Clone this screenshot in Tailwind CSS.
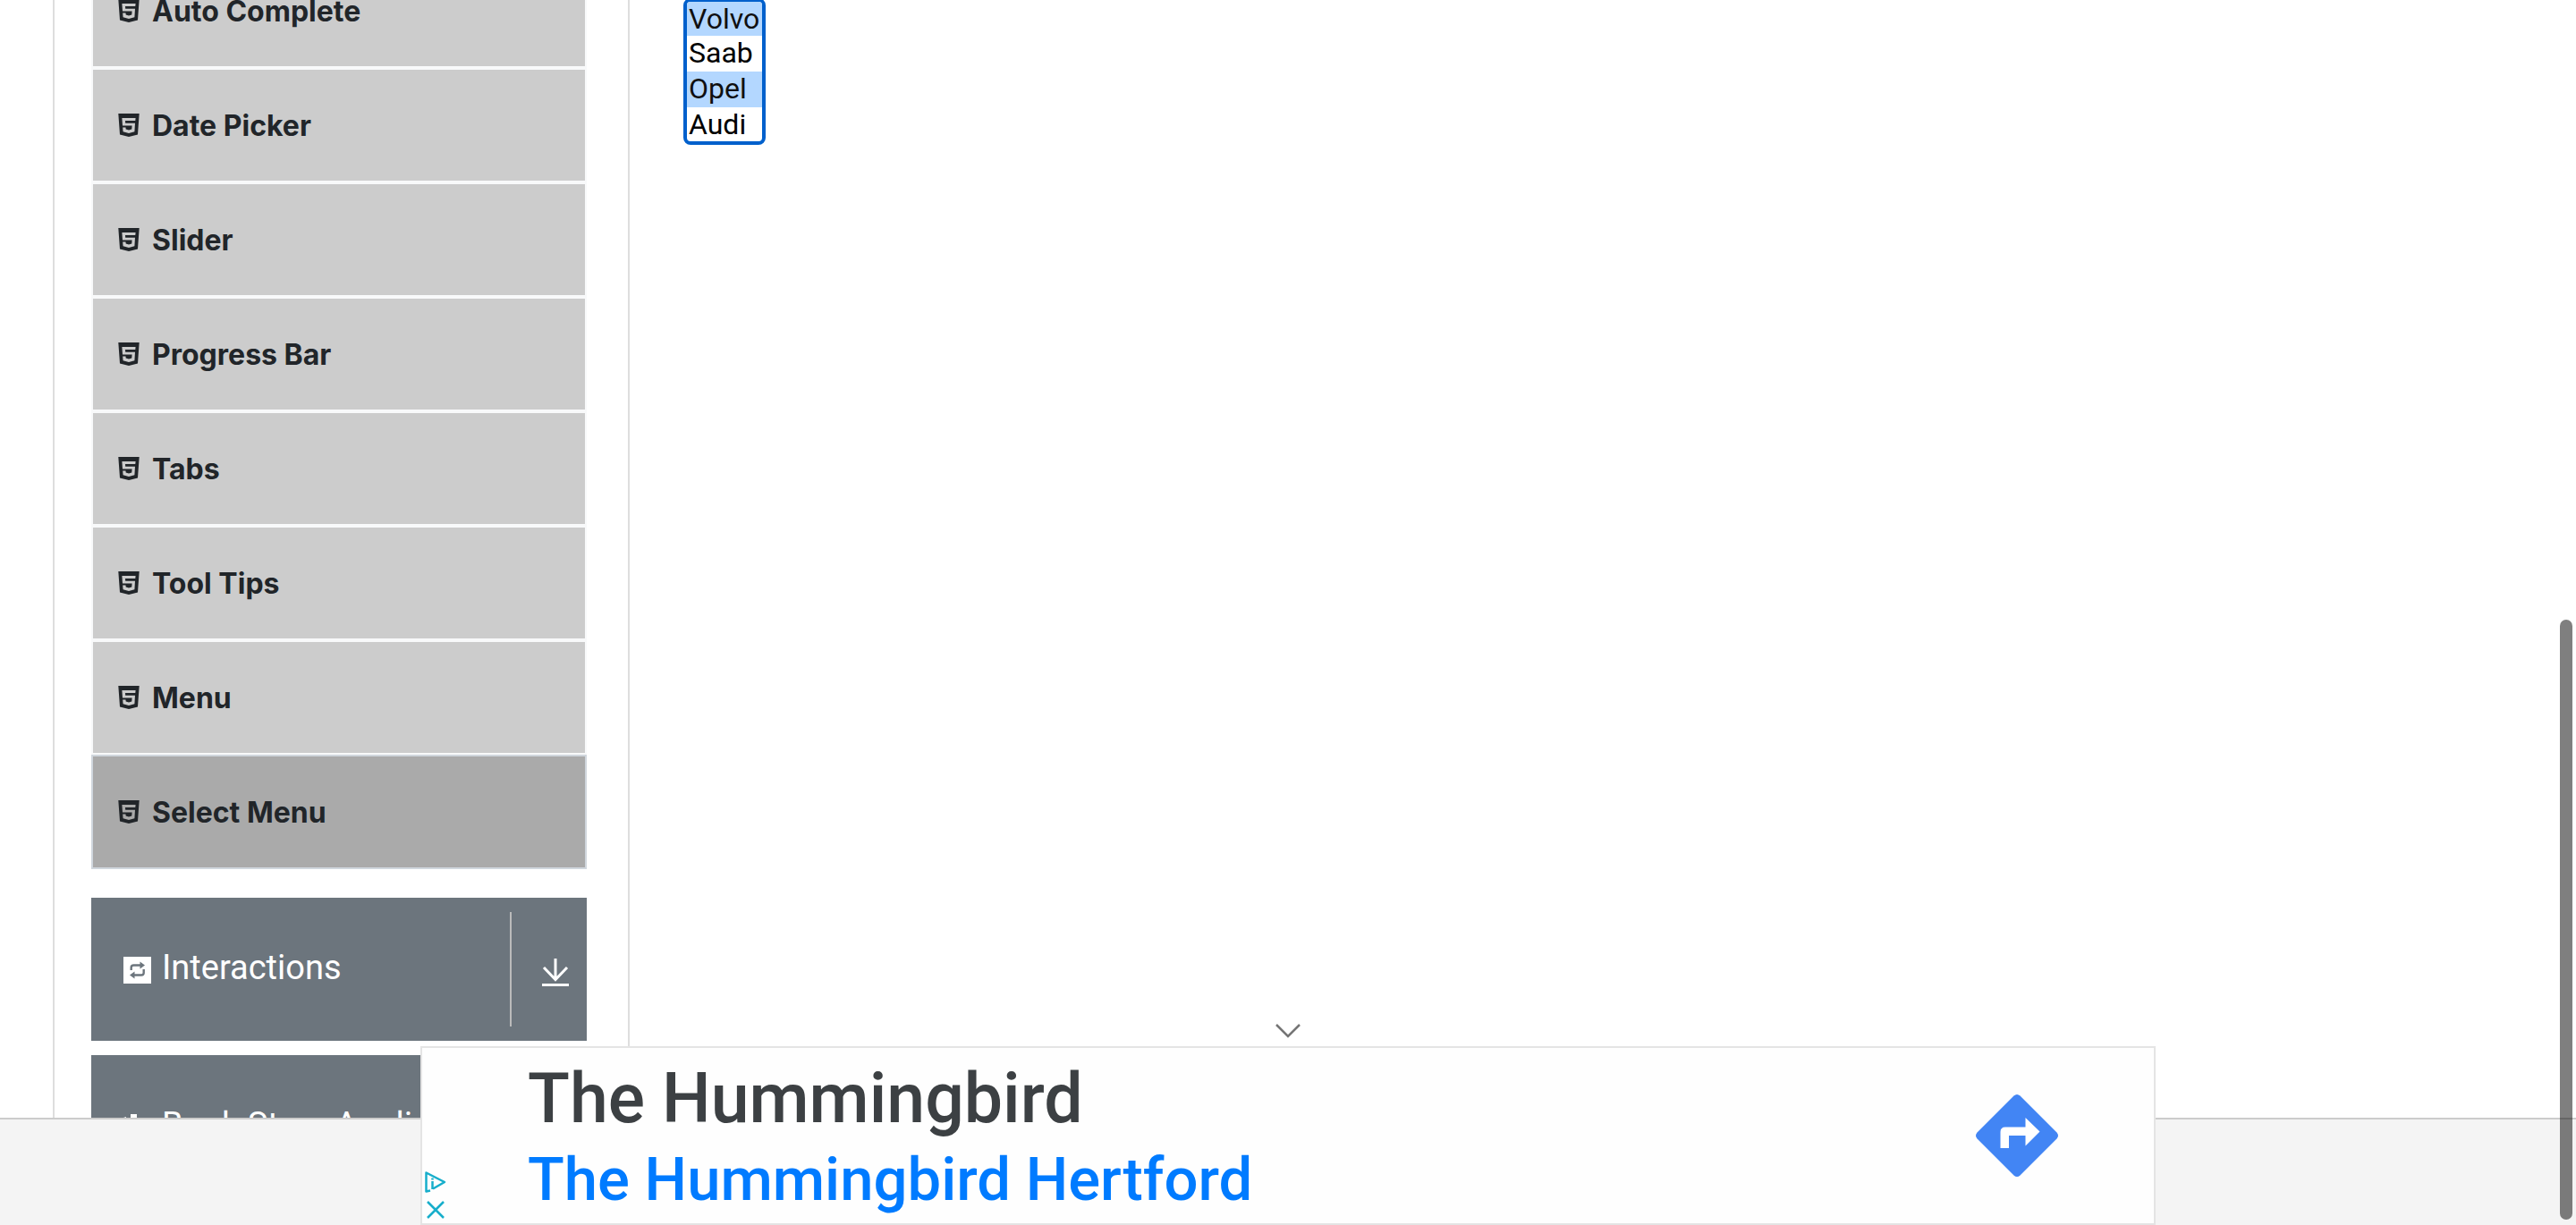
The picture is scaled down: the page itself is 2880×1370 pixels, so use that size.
<!DOCTYPE html>
<html lang="en">
<head>
<meta charset="utf-8">
<title>Select Menu</title>
<script src="https://cdn.jsdelivr.net/npm/@tailwindcss/browser@4"></script>
</head>
<body class="relative flex h-screen flex-col overflow-hidden bg-white font-[Inter,sans-serif] text-[32px] leading-[40px] text-[#212529]">
<svg class="hidden" aria-hidden="true">
  <symbol id="html5" viewBox="0 0 24 26"><path fill="currentColor" fill-rule="evenodd" d="M0.3 0H23.7L22 23.4L12 26L2 23.4ZM4.4 5L5 13.6H15.6L15.3 17.6L12 18.6L8.7 17.6L8.5 15.6H5.2L5.6 20.2L12 22L18.4 20.2L19 10.7H8.2L8 8H19.3L19.6 5Z"/></symbol>
</svg>
<main class="flex min-h-0 flex-1 overflow-hidden">
  <nav class="ml-[59px] w-[645px] shrink-0 border-x-2 border-[#dedede] pr-[46px] pl-[41px]">
    <ul class="-mt-[52px] font-bold">
      <li><a href="#" class="flex h-32 items-center gap-[14px] border-2 border-[#f8f9fa] bg-[#ccc] px-7"><svg class="h-[26px] w-6"><use href="#html5"/></svg><span class="pt-[2px]">Auto Complete</span></a></li>
      <li><a href="#" class="flex h-32 items-center gap-[14px] border-2 border-[#f8f9fa] bg-[#ccc] px-7"><svg class="h-[26px] w-6"><use href="#html5"/></svg><span class="pt-[2px]">Date Picker</span></a></li>
      <li><a href="#" class="flex h-32 items-center gap-[14px] border-2 border-[#f8f9fa] bg-[#ccc] px-7"><svg class="h-[26px] w-6"><use href="#html5"/></svg><span class="pt-[2px]">Slider</span></a></li>
      <li><a href="#" class="flex h-32 items-center gap-[14px] border-2 border-[#f8f9fa] bg-[#ccc] px-7"><svg class="h-[26px] w-6"><use href="#html5"/></svg><span class="pt-[2px]">Progress Bar</span></a></li>
      <li><a href="#" class="flex h-32 items-center gap-[14px] border-2 border-[#f8f9fa] bg-[#ccc] px-7"><svg class="h-[26px] w-6"><use href="#html5"/></svg><span class="pt-[2px]">Tabs</span></a></li>
      <li><a href="#" class="flex h-32 items-center gap-[14px] border-2 border-[#f8f9fa] bg-[#ccc] px-7"><svg class="h-[26px] w-6"><use href="#html5"/></svg><span class="pt-[2px]">Tool Tips</span></a></li>
      <li><a href="#" class="flex h-32 items-center gap-[14px] border-2 border-[#f8f9fa] bg-[#ccc] px-7"><svg class="h-[26px] w-6"><use href="#html5"/></svg><span class="pt-[2px]">Menu</span></a></li>
      <li><a href="#" class="flex h-32 items-center gap-[14px] border-2 border-[#d0d6dd] bg-[#aaa] px-7"><svg class="h-[26px] w-6"><use href="#html5"/></svg><span class="pt-[2px]">Select Menu</span></a></li>
    </ul>
    <button type="button" class="mt-8 flex h-40 w-full items-center bg-[#6c757d] py-4 pl-9 text-left font-[Roboto,sans-serif] text-[38px] text-white">
      <svg class="mt-[2px] h-[30px] w-[31px]" viewBox="0 0 31 30"><path fill="#fff" d="M0 0H31V30H0Z"/><path fill="none" stroke="#6c757d" stroke-width="2.4" d="M8.700 15V12Q8.700 9.500 11.500 9.500H19M22.700 14V18Q22.700 20.500 20 20.500H12"/><path fill="#6c757d" d="M18.500 5.500L24 9.500L18.500 13.500ZM12.500 16.500V24.500L7 20.500Z"/></svg>
      <span class="ml-3 flex-1 pb-1">Interactions</span>
      <span class="flex h-32 w-[86px] items-center border-l-2 border-[#bbb] pl-[34px]"><svg class="mt-2 h-8 w-[30px]" viewBox="0 0 30 32" fill="none" stroke="#fff" stroke-width="3"><path d="M15 0V22M2 10L15 23.500L28 10M0 29.500H30"/></svg></span>
    </button>
    <button type="button" class="mt-4 flex h-40 w-full items-center bg-[#6c757d] py-4 pl-9 text-left font-[Roboto,sans-serif] text-[38px] text-white">
      <svg class="mt-[2px] h-[30px] w-[31px]" viewBox="0 0 31 30" fill="#fff"><path d="M8 0H15V5H8ZM0 4L3 3V28H0ZM18 10H29V28H5V10Z"/></svg>
      <span class="ml-3 flex-1 pb-1 whitespace-nowrap">Book Store Application</span>
    </button>
  </nav>
  <section class="flex-1 pl-[60px]">
    <label for="cars" class="sr-only">Standard multi select</label>
    <select id="cars" multiple size="4" class="-mt-[2px] h-[164px] w-[92px] overflow-hidden rounded-lg border-4 border-[#0060cc] bg-white p-0 font-[Roboto,sans-serif] text-black">
      <option selected class="h-[38px] bg-[#b3d7ff] from-[#b3d7ff] to-[#b3d7ff] p-0 pl-[2px] leading-[34px] checked:bg-linear-to-r">Volvo</option>
      <option class="h-10 p-0 pl-[2px] leading-[40px]">Saab</option>
      <option selected class="h-10 bg-[#b3d7ff] from-[#b3d7ff] to-[#b3d7ff] p-0 pl-[2px] leading-[40px] checked:bg-linear-to-r">Opel</option>
      <option class="h-[38px] p-0 pl-[2px] leading-[40px]">Audi</option>
    </select>
  </section>
</main>
<footer class="h-[120px] shrink-0 border-t-2 border-[#ccc] bg-[#f4f4f4]"></footer>

<aside class="absolute bottom-0 left-1/2 w-[1940px] -translate-x-1/2">
  <button type="button" aria-label="Collapse" class="mx-auto mb-2 block"><svg class="h-[18px] w-7" viewBox="0 0 28 18" fill="none" stroke="#757575" stroke-width="2.500"><path d="M1 2L14 15L27 2"/></svg></button>
  <div class="relative flex h-[200px] items-center justify-between border-2 border-[#e4e4e4] bg-[#fefefe] pr-[107px] pl-[118px]">
    <div class="pt-2 font-[Roboto,sans-serif] font-medium">
      <a href="#" class="block text-[77px] leading-[90px] text-[#3c4043]">The Hummingbird</a>
      <a href="#" class="block text-[67px] leading-[90px] text-[#007bff]">The Hummingbird Hertford</a>
    </div>
    <a href="#" aria-label="Directions"><svg class="h-[92px] w-[92px]" viewBox="0 0 92 92"><path fill="#4285f4" d="M42.500 1.500Q46-1.500 49.500 1.500L90.500 42.500Q93.500 46 90.500 49.500L49.500 90.500Q46 93.500 42.500 90.500L1.500 49.500Q-1.500 46 1.500 42.500Z"/><path fill="#fff" d="M27.500 60V42Q27.500 36.500 33 36.500H55.500V26L71.500 41.500L55.500 57.500V46H37V60Z"/></svg></a>
    <div class="absolute bottom-[5px] left-[3px] flex flex-col gap-[9px] text-[#17aecb]">
      <a href="#" aria-label="AdChoices"><svg class="h-6 w-6" viewBox="0 0 24 24" fill="none" stroke="currentColor" stroke-width="2.500"><path stroke-linejoin="round" d="M6 21.500L1.500 22.500V1.500L22 12L9 19.500"/><path d="M8.500 11V20M8.500 7.500V9.500"/></svg></a>
      <button type="button" aria-label="Close"><svg class="ml-[2px] h-5 w-5" viewBox="0 0 20 20" fill="none" stroke="currentColor" stroke-width="2.500"><path d="M1 1L19 19M19 1L1 19"/></svg></button>
    </div>
  </div>
</aside>
<div class="absolute top-[693px] right-1 bottom-[6px] w-[14px] rounded-full bg-black/50"></div>
</body>
</html>
